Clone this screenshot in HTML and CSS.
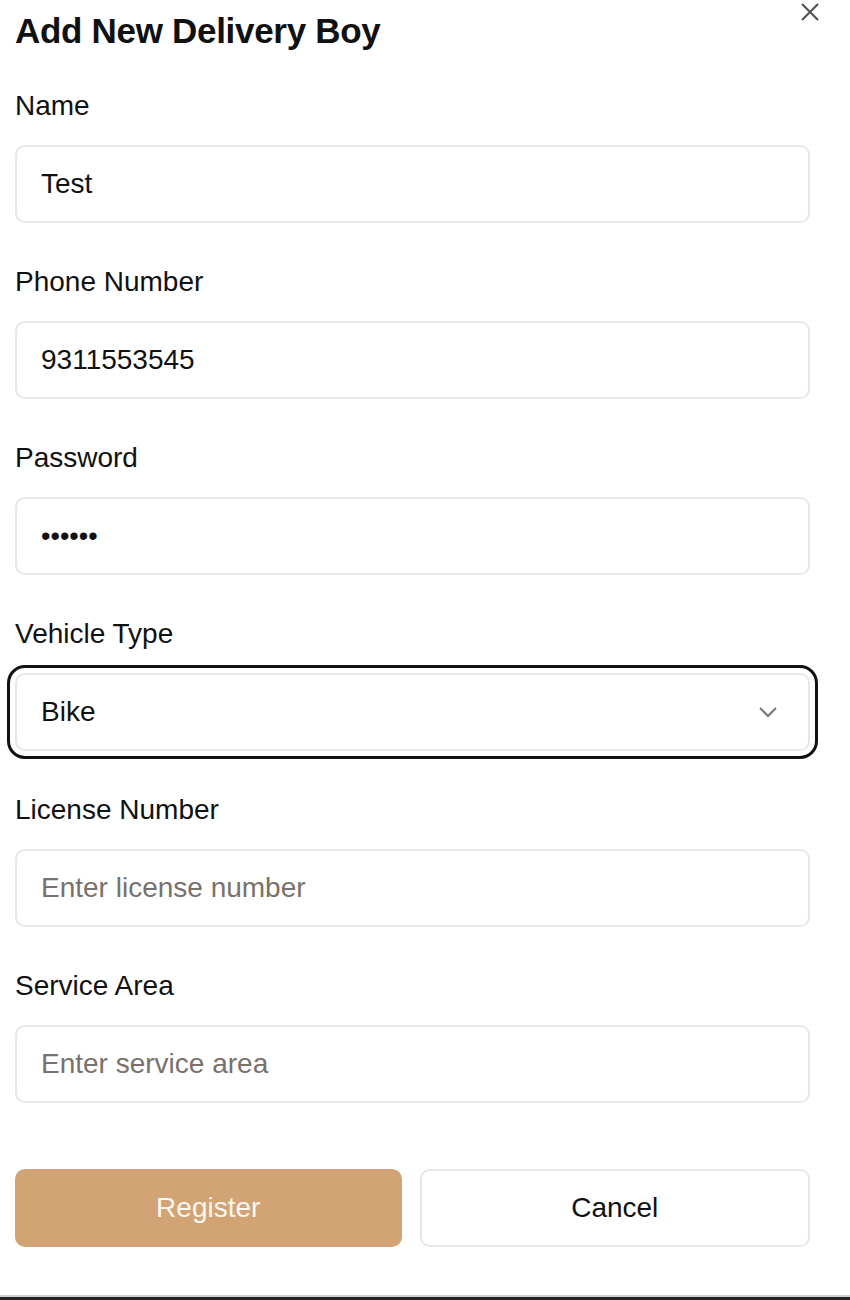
FILE: index.html
```html
<!DOCTYPE html>
<html lang="en">
<head>
<meta charset="utf-8">
<title>Add New Delivery Boy</title>
<link rel="stylesheet" href="styles.css">
</head>
<body>
<div class="sheet">
  <div class="modal">
    <button class="close" aria-label="Close">
      <svg width="20" height="20" viewBox="0 0 20 20"><path d="M2 2 L18 18 M18 2 L2 18" stroke="#555" stroke-width="2.2" fill="none"/></svg>
    </button>
    <h1 class="title">Add New Delivery Boy</h1>
    <form class="form">
      <div class="field">
        <label class="label">Name</label>
        <div class="input">Test</div>
      </div>
      <div class="field">
        <label class="label">Phone Number</label>
        <div class="input">9311553545</div>
      </div>
      <div class="field">
        <label class="label">Password</label>
        <div class="input dots">&#8226;&#8226;&#8226;&#8226;&#8226;&#8226;</div>
      </div>
      <div class="field">
        <label class="label">Vehicle Type</label>
        <div class="input select focused">
          <span>Bike</span>
          <svg class="chev" width="20" height="12" viewBox="0 0 20 12"><path d="M2 2 L10 10 L18 2" stroke="#777" stroke-width="2" fill="none"/></svg>
        </div>
      </div>
      <div class="field">
        <label class="label">License Number</label>
        <div class="input placeholder">Enter license number</div>
      </div>
      <div class="field">
        <label class="label">Service Area</label>
        <div class="input placeholder">Enter service area</div>
      </div>
      <div class="actions">
        <button type="button" class="btn primary">Register</button>
        <button type="button" class="btn secondary">Cancel</button>
      </div>
    </form>
  </div>
</div>
</body>
</html>
```
FILE: styles.css
```css
* { box-sizing: border-box; }
html, body { margin: 0; padding: 0; background: #fff; }
body { font-family: "Liberation Sans", Arial, sans-serif; color: #111; }
.sheet {
  height: 1300px;
  border-bottom: 3px solid #222;
  box-shadow: inset 0 -2px 0 #d0d0d0;
}
.modal {
  position: relative;
  width: 795px;
  margin-left: 15px;
  padding-top: 11px;
}
.close {
  position: absolute;
  top: 2px;
  left: 785px;
  border: 0;
  background: none;
  padding: 0;
  width: 20px;
  height: 20px;
}
.title {
  margin: 0;
  font-size: 35px;
  line-height: 40px;
  font-weight: 700;
  letter-spacing: -0.3px;
  color: #111;
}
.form {
  display: flex;
  flex-direction: column;
  gap: 44px;
  margin-top: 40px;
}
.field {
  display: flex;
  flex-direction: column;
  gap: 24px;
}
.label {
  font-size: 28px;
  line-height: 30px;
  color: #111;
}
.input {
  height: 78px;
  border: 2px solid #e6e6e6;
  border-radius: 10px;
  padding: 0 24px;
  display: flex;
  align-items: center;
  font-size: 28px;
  color: #111;
}
.dots { font-size: 27px; }
.placeholder { color: #78716c; }
.select { justify-content: space-between; padding-right: 30px; }
.focused {
  outline: 3px solid #111;
  outline-offset: 5px;
  border-radius: 10px;
}
.actions {
  display: flex;
  gap: 18px;
  margin-top: 22px;
}
.btn {
  flex: 1;
  height: 78px;
  border-radius: 10px;
  font-family: "Liberation Sans", Arial, sans-serif;
  font-size: 28px;
}
.primary {
  background: #d2a375;
  border: 0;
  color: #fdf7f0;
}
.secondary {
  background: #fff;
  border: 2px solid #e6e6e6;
  color: #111;
}
```
